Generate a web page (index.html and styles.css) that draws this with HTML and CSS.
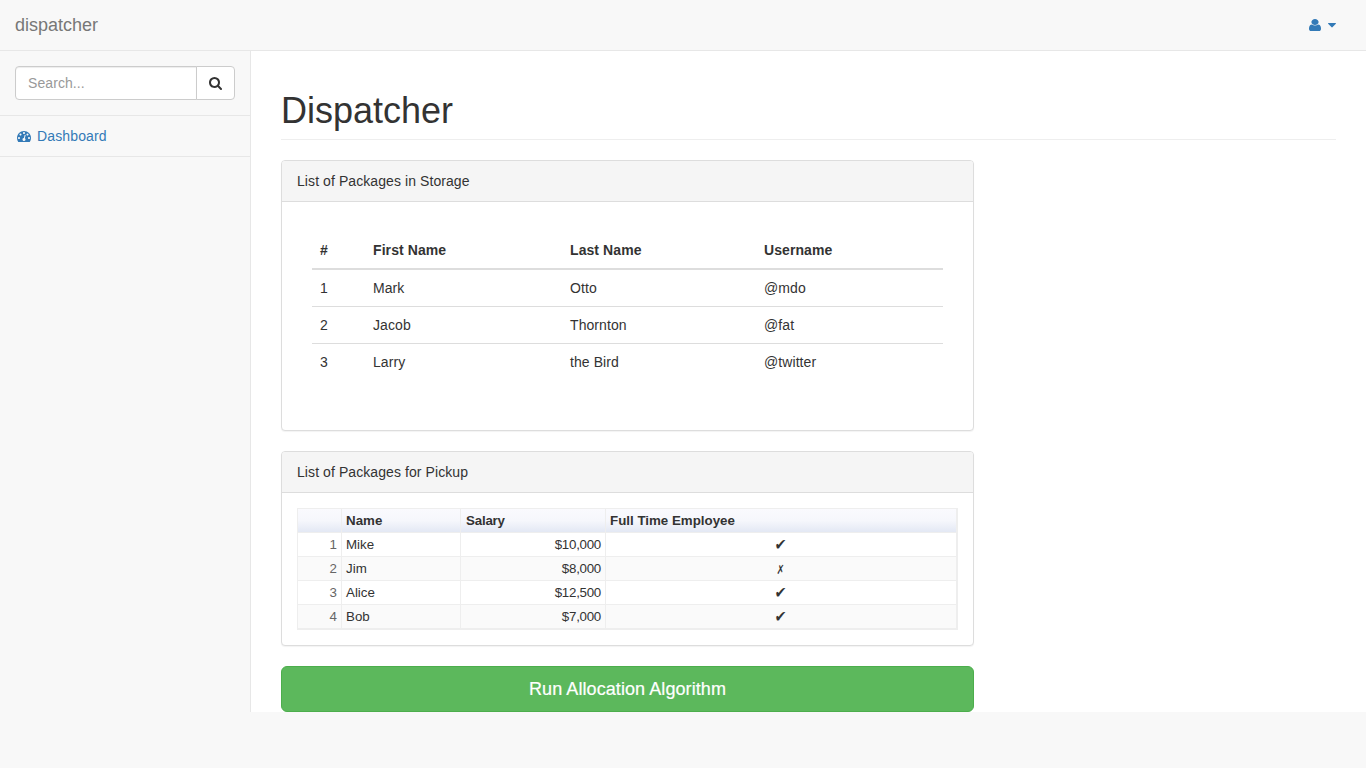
FILE: index.html
```html
<!DOCTYPE html>
<html lang="en">
<head>
<meta charset="utf-8">
<title>dispatcher</title>
<link rel="stylesheet" href="styles.css">
</head>
<body>
<nav class="navbar">
  <a class="brand">dispatcher</a>
  <a class="user-menu">
    <svg class="icon user-icon" preserveAspectRatio="none" viewBox="-320 -1536 1920 1792"><path transform="scale(1,-1)" d="M1280 137q0 -109 -62.5 -187t-150.5 -78h-854q-88 0 -150.5 78t-62.5 187q0 85 8.5 160.5t31.5 152t58.5 131t94 89t134.5 34.5q131 -128 313 -128t313 128q76 0 134.5 -34.5t94 -89t58.5 -131t31.5 -152t8.5 -160.5zM1024 1024q0 -159 -112.5 -271.5t-271.5 -112.5t-271.5 112.5t-112.5 271.5t112.5 271.5t271.5 112.5t271.5 -112.5t112.5 -271.5z"/></svg>
    <svg class="icon caret-icon" viewBox="0 -1536 1024 1792"><path transform="scale(1,-1)" d="M1024 832q0 -26 -19 -45l-448 -448q-19 -19 -45 -19t-45 19l-448 448q-19 19 -19 45t19 45t45 19h896q26 0 45 -19t19 -45z"/></svg>
  </a>
</nav>
<div class="layout">
  <aside class="sidebar">
    <div class="search">
      <input class="search-input" type="text" placeholder="Search...">
      <button class="search-button" type="button"><svg class="icon search-icon" viewBox="0 -1536 1664 1792"><path fill-rule="evenodd" transform="scale(1,-1)" d="M1152 704q0 -185 -131.5 -316.5t-316.5 -131.5t-316.5 131.5t-131.5 316.5t131.5 316.5t316.5 131.5t316.5 -131.5t131.5 -316.5zM1664 -128q0 -52 -38 -90t-90 -38q-54 0 -90 38l-343 342q-179 -124 -399 -124q-143 0 -273.5 55.5t-225 150t-150 225t-55.5 273.5t55.5 273.5t150 225t225 150t273.5 55.5t273.5 -55.5t225 -150t150 -225t55.5 -273.5q0 -220 -124 -399l343 -343q37 -37 37 -90z"/></svg></button>
    </div>
    <a class="side-link">
      <svg class="icon dash-icon" viewBox="0 -1536 1792 1792"><path fill-rule="evenodd" transform="scale(1,-1)" d="M384 384q0 53 -37.5 90.5t-90.5 37.5t-90.5 -37.5t-37.5 -90.5t37.5 -90.5t90.5 -37.5t90.5 37.5t37.5 90.5zM576 832q0 53 -37.5 90.5t-90.5 37.5t-90.5 -37.5t-37.5 -90.5t37.5 -90.5t90.5 -37.5t90.5 37.5t37.5 90.5zM1004 351l101 382q6 26 -7.5 48.5t-38.5 29.5t-48 -6.5t-30 -39.5l-101 -382q-60 -5 -107 -43.5t-63 -98.5q-20 -77 20 -146t117 -89t146 20t89 117q16 60 -6 117t-72 91zM1664 384q0 53 -37.5 90.5t-90.5 37.5t-90.5 -37.5t-37.5 -90.5t37.5 -90.5t90.5 -37.5t90.5 37.5t37.5 90.5zM1024 1024q0 53 -37.5 90.5t-90.5 37.5t-90.5 -37.5t-37.5 -90.5t37.5 -90.5t90.5 -37.5t90.5 37.5t37.5 90.5zM1472 832q0 53 -37.5 90.5t-90.5 37.5t-90.5 -37.5t-37.5 -90.5t37.5 -90.5t90.5 -37.5t90.5 37.5t37.5 90.5zM1792 384q0 -261 -141 -483q-19 -29 -54 -29h-1402q-35 0 -54 29q-141 221 -141 483q0 182 71 348t191 286t286 191t348 71t348 -71t286 -191t191 -286t71 -348z"/></svg>
      <span>Dashboard</span>
    </a>
  </aside>
  <main class="page">
    <h1 class="page-header">Dispatcher</h1>
    <div class="content">
      <section class="panel">
        <div class="panel-heading">List of Packages in Storage</div>
        <div class="panel-body storage-body">
          <table class="storage">
            <colgroup><col class="c-num"><col class="c-first"><col class="c-last"><col></colgroup>
            <thead><tr><th>#</th><th>First Name</th><th>Last Name</th><th>Username</th></tr></thead>
            <tbody>
              <tr><td>1</td><td>Mark</td><td>Otto</td><td>@mdo</td></tr>
              <tr><td>2</td><td>Jacob</td><td>Thornton</td><td>@fat</td></tr>
              <tr><td>3</td><td>Larry</td><td>the Bird</td><td>@twitter</td></tr>
            </tbody>
          </table>
        </div>
      </section>
      <section class="panel">
        <div class="panel-heading">List of Packages for Pickup</div>
        <div class="panel-body">
          <table class="pickup">
            <colgroup><col class="p-num"><col class="p-name"><col class="p-salary"><col></colgroup>
            <thead><tr><th></th><th>Name</th><th class="salary-head">Salary</th><th>Full Time Employee</th></tr></thead>
            <tbody>
              <tr><td class="num">1</td><td>Mike</td><td class="money">$10,000</td><td class="mark"><span class="yes">✔</span></td></tr>
              <tr><td class="num">2</td><td>Jim</td><td class="money">$8,000</td><td class="mark"><span class="no">✗</span></td></tr>
              <tr><td class="num">3</td><td>Alice</td><td class="money">$12,500</td><td class="mark"><span class="yes">✔</span></td></tr>
              <tr><td class="num">4</td><td>Bob</td><td class="money">$7,000</td><td class="mark"><span class="yes">✔</span></td></tr>
            </tbody>
          </table>
        </div>
      </section>
      <button class="run" type="button">Run Allocation Algorithm</button>
    </div>
  </main>
</div>
</body>
</html>
```
FILE: styles.css
```css
* { box-sizing: border-box; }
body {
  margin: 0;
  background: #f8f8f8;
  color: #333;
  font: 14px/20px "Liberation Sans", Arial, sans-serif;
}
.icon { display: block; height: 14px; fill: currentColor; flex: none; }

.navbar {
  display: flex;
  justify-content: space-between;
  height: 51px;
  padding: 15px 30px 15px 15px;
  border-bottom: 1px solid #e7e7e7;
}
.brand { color: #777; font-size: 18px; }
.user-menu { display: flex; align-items: center; gap: 4px; color: #337ab7; }
.user-icon { width: 18px; }
.caret-icon { width: 8px; }

.layout { display: flex; height: 661px; }
.sidebar { width: 250px; }
.search {
  display: flex;
  padding: 15px;
  border-bottom: 1px solid #e7e7e7;
}
.search-input {
  flex: 1;
  min-width: 0;
  height: 34px;
  padding: 6px 12px;
  border: 1px solid #ccc;
  border-radius: 4px 0 0 4px;
  background: #fff;
  font: inherit;
  letter-spacing: .08px;
  box-shadow: inset 0 1px 1px rgba(0, 0, 0, .075);
}
.search-input::placeholder { color: #999; }
.search-button {
  width: 39px;
  height: 34px;
  margin-left: -1px;
  padding: 0 12px;
  border: 1px solid #ccc;
  border-radius: 0 4px 4px 0;
  background: #fff;
  color: #333;
}
.search-icon { width: 13px; }
.side-link {
  display: flex;
  align-items: center;
  gap: 6px;
  padding: 10px 17px;
  border-bottom: 1px solid #e7e7e7;
  color: #337ab7;
  letter-spacing: .14px;
}
.dash-icon { width: 14px; }

.page {
  flex: 1;
  padding: 40px 30px 0;
  border-left: 1px solid #e7e7e7;
  background: #fff;
}
.page-header {
  margin: 0 0 20px;
  padding-bottom: 9px;
  border-bottom: 1px solid #eee;
  font-size: 36px;
  font-weight: 400;
  line-height: 39px;
}
.content { width: 693px; }
.panel {
  margin-bottom: 20px;
  border: 1px solid #ddd;
  border-radius: 4px;
  background: #fff;
  box-shadow: 0 1px 1px rgba(0, 0, 0, .05);
}
.panel-heading {
  padding: 10px 15px;
  border-bottom: 1px solid #ddd;
  border-radius: 3px 3px 0 0;
  background: #f5f5f5;
  letter-spacing: .08px;
}
.panel-body { padding: 15px; }
.storage-body { padding: 30px 30px 50px; }

.storage {
  width: 631px;
  table-layout: fixed;
  border-spacing: 0;
  letter-spacing: .08px;
}
.c-num { width: 53px; }
.c-first { width: 197px; }
.c-last { width: 194px; }
.storage th, .storage td { padding: 8px; text-align: left; }
.storage th { border-bottom: 2px solid #ddd; }
.storage tbody tr + tr td { border-top: 1px solid #ddd; }

.pickup {
  width: 661px;
  table-layout: fixed;
  border: 1px solid #eee;
  border-spacing: 0;
  font-size: 13.333px;
  line-height: 23px;
}
.p-num { width: 44px; }
.p-name { width: 119px; }
.p-salary { width: 145px; }
.pickup th, .pickup td {
  height: 24px;
  padding: 0 4px;
  border-right: 1px solid #eee;
  border-bottom: 1px solid #eee;
  text-align: left;
}
.pickup th { background: linear-gradient(#fafafe, #f6f7fc 50%, #e3e8f4); }
.pickup .salary-head { padding-left: 5px; letter-spacing: -.2px; }
.pickup tbody tr:nth-child(even) { background: #fafafa; }
.pickup .num { color: #666; text-align: right; }
.pickup .money { text-align: right; letter-spacing: -.27px; }
.pickup .mark {
  font-family: "DejaVu Sans", sans-serif;
  line-height: 20px;
  text-align: center;
}
.yes, .no { display: inline-block; }
.yes { transform: scale(1.05, 1.2) skewX(-5deg); }
.no { transform: translateY(1px) scale(.72, .95); }

.run {
  display: block;
  width: 100%;
  height: 46px;
  border: 1px solid #4cae4c;
  border-radius: 6px;
  background: #5cb85c;
  color: #fff;
  font: 18px/24px "Liberation Sans", Arial, sans-serif;
  letter-spacing: .08px;
  -webkit-text-stroke: .2px #fff;
}
```
